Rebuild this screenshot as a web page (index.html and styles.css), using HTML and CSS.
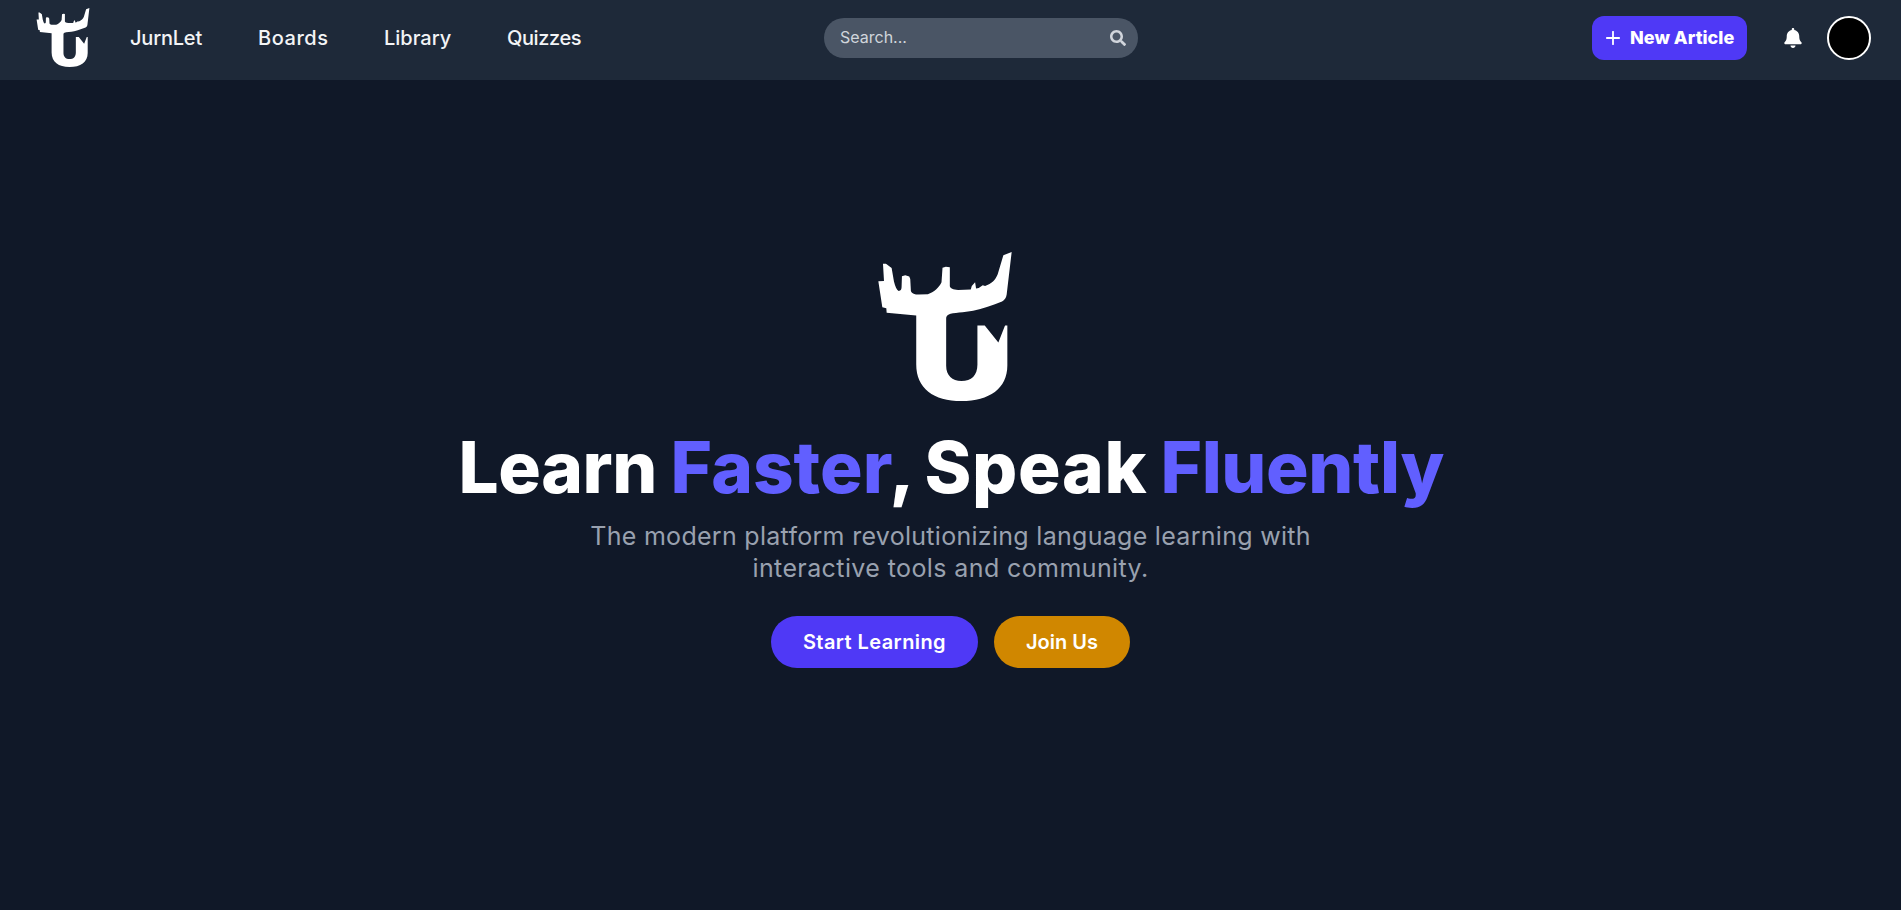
FILE: index.html
```html
<!DOCTYPE html>
<html lang="en">
<head>
<meta charset="utf-8">
<title>JurnLet</title>
<link rel="stylesheet" href="styles.css">
</head>
<body>
<svg width="0" height="0" class="defs">
  <symbol id="moose" viewBox="55 36 403 448">
    <path d="M70 71H79L96 84L103 125C107 140 111 150 117 153C124 153 126 148 126 140L127 109L137 106L149 110L152 117L154 154C157 161 165 164 178 164L205 163C223 157 239 143 246 127L249 83L259 80L271 82V139C273 146 280 149 296 150L334 149L337 138L347 127L350 146L358 144L370 136L377 138C397 132 408 120 415 103L432 46L457 36L442 164C440 175 436 181 428 185C400 196 370 207 341 213C315 218 280 219 268 224C262 227 260 230 260 237V378C260 407 278 424 306 424C336 424 354 407 354 374V257H376L417 308L437 257H444V377C444 446 390 484 306 484C222 484 170 446 170 374V227L81 219L80 205L68 202L56 124L73 123Z"/>
  </symbol>
</svg>
<header class="bar">
  <svg class="bar-logo" aria-label="Home"><use href="#moose"/></svg>
  <nav class="links">
    <a class="l1">JurnLet</a><a class="l2">Boards</a><a class="l3">Library</a><a class="l4">Quizzes</a>
  </nav>
  <div class="search">
    <span>Search...</span>
    <svg viewBox="0 0 512 512"><path d="M505 442.700L405.300 343c-4.500-4.500-10.600-7-17-7H372c27.600-35.300 44-79.700 44-128C416 93.100 322.900 0 208 0S0 93.100 0 208s93.100 208 208 208c48.300 0 92.700-16.400 128-44v16.300c0 6.400 2.500 12.500 7 17l99.700 99.700c9.400 9.400 24.600 9.400 33.900 0l28.300-28.300c9.400-9.400 9.400-24.600.1-34zM208 336c-70.700 0-128-57.200-128-128 0-70.700 57.200-128 128-128 70.700 0 128 57.200 128 128 0 70.700-57.200 128-128 128z"/></svg>
  </div>
  <div class="actions">
    <a class="new"><svg viewBox="0 0 14 14"><path d="M7 .8v12.400M.8 7h12.400"/></svg><span>New Article</span></a>
    <svg class="bell" viewBox="0 0 448 512"><path d="M224 512c35.320 0 63.970-28.650 63.970-64H160.030c0 35.350 28.650 64 63.970 64zm215.390-149.710c-19.320-20.760-55.470-51.990-55.470-154.290 0-77.700-54.480-139.900-127.940-155.160V32c0-17.670-14.320-32-31.980-32s-31.980 14.330-31.980 32v20.840C118.560 68.100 64.080 130.300 64.080 208c0 102.300-36.150 133.530-55.470 154.290-6 6.450-8.660 14.160-8.610 21.710.11 16.400 12.980 32 32.100 32h383.800c19.120 0 32-15.600 32.100-32 .05-7.550-2.610-15.270-8.610-21.710z"/></svg>
    <span class="avatar"></span>
  </div>
</header>
<main class="hero">
  <svg class="hero-logo"><use href="#moose"/></svg>
  <h1><span class="w1">Learn</span> <span class="w2 hl">Faster</span><span class="w3">,</span> <span class="w4">Speak</span> <span class="w5 hl">Fluently</span></h1>
  <p><span class="p1">The modern platform revolutionizing language learning with</span><br><span class="p2">interactive tools and community.</span></p>
  <div class="cta"><a class="start"><span>Start Learning</span></a><a class="join"><span>Join Us</span></a></div>
</main>
</body>
</html>
```
FILE: styles.css
```css
* { box-sizing: border-box; }
body { margin: 0; height: 910px; overflow: hidden; background: #101828; color: #fff; font-family: Inter, "Open Sans", sans-serif; }
.defs { display: block; position: absolute; }
.bar { height: 80px; background: #1e2939; display: flex; align-items: flex-start; }
.bar-logo { width: 54px; height: 59px; margin: 8px 0 0 35.500px; fill: #fff; flex: none; }
.links { display: flex; margin: 23px 0 0 40.500px; font-size: 20px; line-height: 30px; font-weight: 500; color: #f3f4f6; }
.links a { white-space: nowrap; flex: none; }
.l1 { width: 128px; letter-spacing: -.2px; }
.l2 { width: 126px; letter-spacing: .55px; }
.l3 { width: 123px; }
.l4 { width: 76px; letter-spacing: -.4px; }
.search { width: 314px; height: 40px; margin: 18px 0 0 241px; padding: 0 12px 0 16px; border-radius: 20px; background: #4a5565; color: #d1d5dc; font-size: 16px; display: flex; align-items: center; justify-content: space-between; flex: none; }
.search svg { width: 16px; height: 16px; fill: #d1d5dc; }
.search span { padding-bottom: 2px; }
.actions { margin: 16px 30px 0 auto; display: flex; align-items: center; }
.new { width: 155px; height: 44px; padding-left: 14px; border-radius: 12px; background: #4f39f6; display: flex; align-items: center; gap: 10px; font-weight: 800; font-size: 18px; white-space: nowrap; }
.new span { padding-bottom: 2px; }
.new svg { width: 14px; height: 14px; stroke: #fff; stroke-width: 1.800; stroke-linecap: round; flex: none; }
.bell { width: 18px; height: 20px; margin: 0 25px 0 37px; fill: #fff; }
.avatar { width: 44px; height: 44px; border-radius: 50%; background: #000; border: 2px solid #fff; }
.hero { display: flex; flex-direction: column; align-items: center; }
.hero-logo { width: 134px; height: 149px; margin: 172px 11px 0 0; fill: #fff; }
h1 { margin: 30px 0 0 6px; font-size: 71px; line-height: 72px; font-weight: 800; width: 990px; display: flex; }
h1 span { display: block; flex: none; white-space: nowrap; }
.hl { color: #615fff; }
.w1 { width: 212px; letter-spacing: -.4px; }
.w2 { width: 219px; }
.w3 { width: 35px; }
.w4 { width: 236px; letter-spacing: .7px; }
.w5 { letter-spacing: -.4px; }
p { margin: 17px 0 0; font-size: 25px; line-height: 32px; color: #99a1af; text-align: center; white-space: nowrap; }
.p1 { letter-spacing: .29px; }
.p2 { letter-spacing: .4px; }
.cta { display: flex; gap: 16px; margin-top: 32px; font-weight: 600; font-size: 20px; }
.cta a { height: 52px; border-radius: 26px; display: flex; align-items: center; justify-content: center; white-space: nowrap; }
.start { width: 207px; background: #4f39f6; letter-spacing: .42px; }
.join { width: 136px; background: #d08700; }
```
